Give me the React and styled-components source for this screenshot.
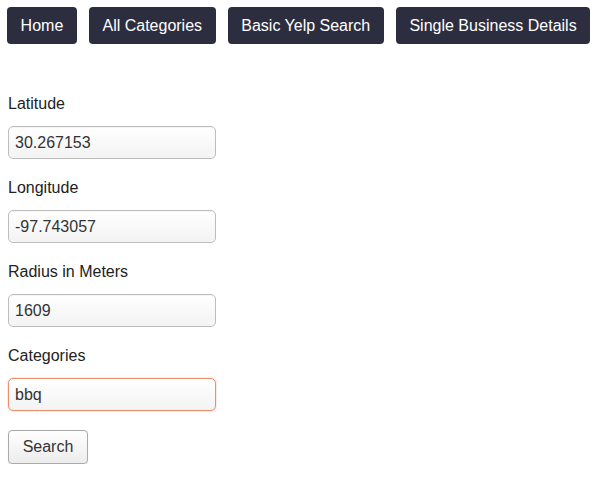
import styled, { createGlobalStyle } from 'styled-components';

const GlobalStyle = createGlobalStyle`
  body {
    margin: 0;
    background: #fff;
    font-family: "Liberation Sans", Arial, sans-serif;
    font-size: 16px;
    color: #222;
    overflow: hidden;
  }
`;

const Nav = styled.nav`
  display: flex;
  gap: 12px;
  padding: 7px;
`;

const NavButton = styled.button`
  flex-shrink: 0;
  height: 37px;
  padding: 0 13.6px;
  border: none;
  border-radius: 4px;
  background: #2c2e3f;
  color: #fff;
  font-family: inherit;
  font-size: 16px;
  white-space: nowrap;
  cursor: pointer;
`;

const Form = styled.form`
  display: flex;
  flex-direction: column;
  align-items: flex-start;
  padding: 44px 8px 0;
`;

const Field = styled.div`
  display: flex;
  flex-direction: column;
  margin-bottom: 20px;
`;

const Label = styled.label`
  line-height: 18px;
  margin-bottom: 13px;
  color: #222;
`;

const Input = styled.input`
  box-sizing: border-box;
  width: 208px;
  height: 33px;
  padding: 0 6px;
  border: 1px solid ${(props) => (props.$active ? '#e8906f' : '#bdbdbd')};
  border-radius: 5px;
  background: linear-gradient(#ffffff, #f3f3f3);
  box-shadow: ${(props) =>
    props.$active ? '0 0 2px rgba(232, 130, 90, 0.6)' : 'inset 0 1px 1px rgba(0, 0, 0, 0.04)'};
  font-family: inherit;
  font-size: 16px;
  color: #333;
  outline: none;
`;

const SearchButton = styled.button`
  box-sizing: border-box;
  width: 80px;
  height: 34px;
  margin-top: -1px;
  border: 1px solid #aaa;
  border-radius: 4px;
  background: linear-gradient(#ffffff, #ececec);
  box-shadow: 0 1px 1px rgba(0, 0, 0, 0.12);
  font-family: inherit;
  font-size: 16px;
  color: #333;
  cursor: pointer;
`;

const links = ['Home', 'All Categories', 'Basic Yelp Search', 'Single Business Details'];

const fields = [
  { label: 'Latitude', value: '30.267153' },
  { label: 'Longitude', value: '-97.743057' },
  { label: 'Radius in Meters', value: '1609' },
  { label: 'Categories', value: 'bbq', active: true },
];

export default function App() {
  return (
    <>
      <GlobalStyle />
      <Nav>
        {links.map((link) => (
          <NavButton key={link}>{link}</NavButton>
        ))}
      </Nav>
      <Form onSubmit={(e) => e.preventDefault()}>
        {fields.map((field) => (
          <Field key={field.label}>
            <Label>{field.label}</Label>
            <Input defaultValue={field.value} $active={field.active} />
          </Field>
        ))}
        <SearchButton type="submit">Search</SearchButton>
      </Form>
    </>
  );
}
